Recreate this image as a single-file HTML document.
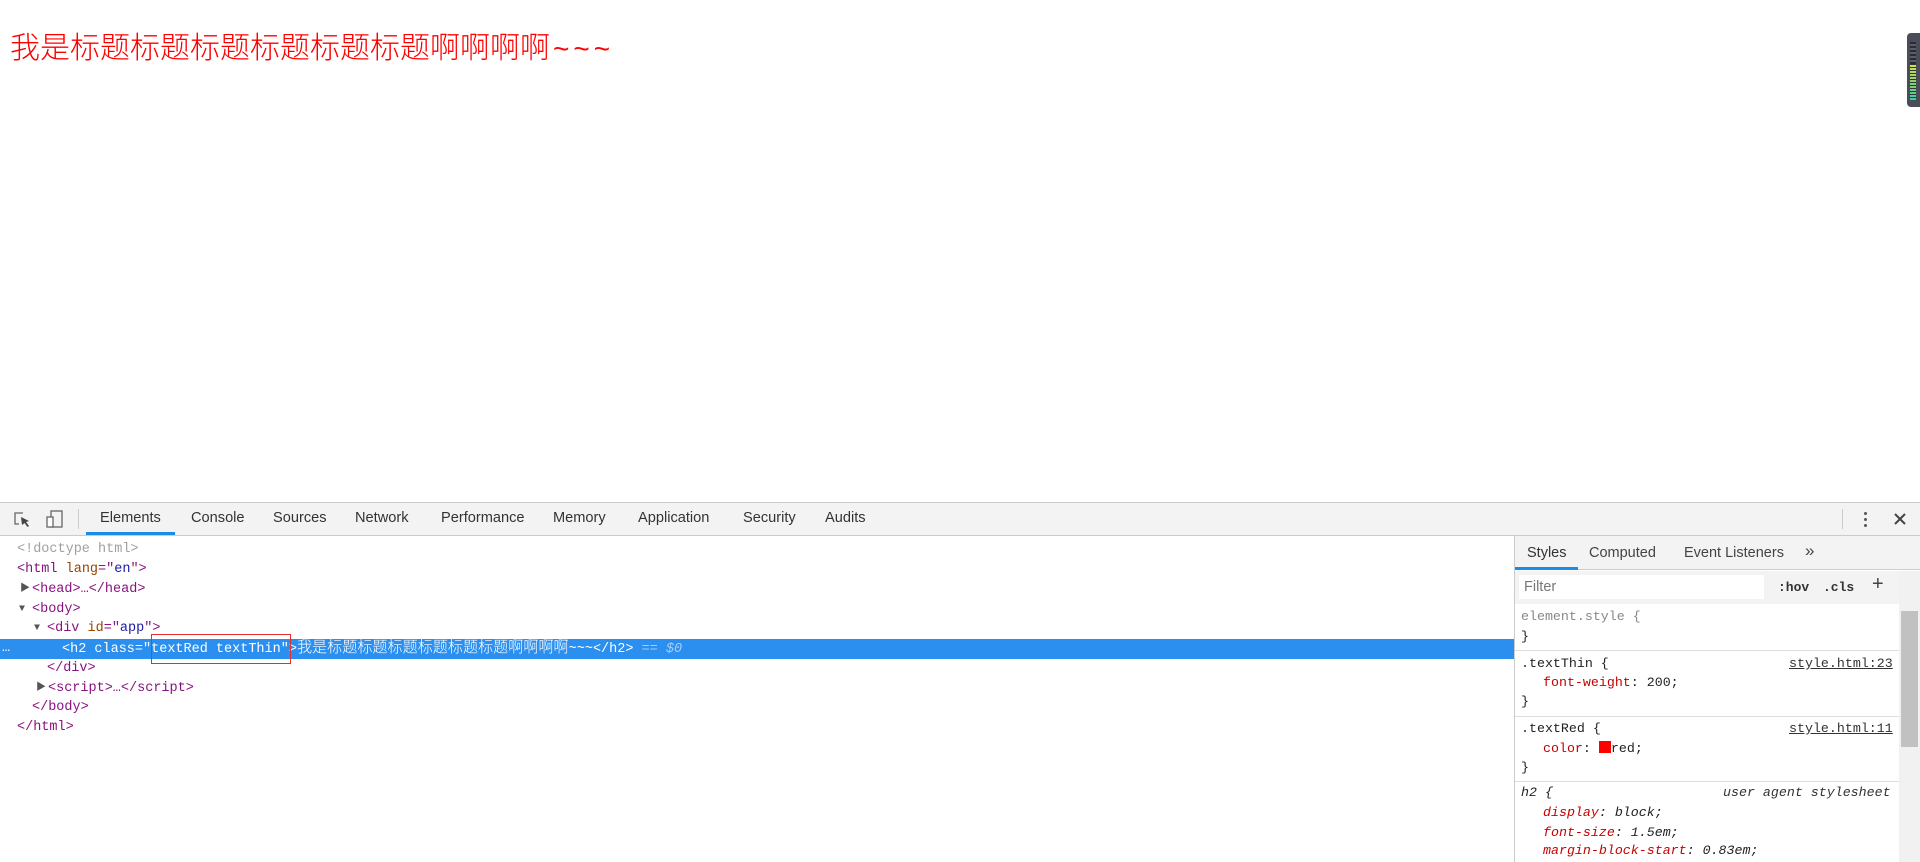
<!DOCTYPE html>
<html><head><meta charset="utf-8">
<style>
*{margin:0;padding:0;box-sizing:border-box}
body{width:1920px;height:862px;position:relative;overflow:hidden;background:#fff;font-family:"Liberation Sans","Noto Sans CJK SC",sans-serif}
.a{position:absolute;white-space:nowrap}
.m{font-family:"Liberation Mono","Noto Sans CJK SC",monospace;font-size:13.5px;line-height:20px;height:20px}
.cj{font-size:15.1px;line-height:14px;font-family:"Noto Sans CJK SC",sans-serif;font-weight:300}
.tag{color:#881280}.an{color:#994500}.av{color:#1a1aa6}.gr{color:#a0a0a0}
.tab{position:absolute;top:510px;font-size:14.6px;color:#333}
.st{font-family:"Liberation Mono",monospace;font-size:13.3px;line-height:20px;color:#222}
.pn{color:#c80000}
</style></head><body>
<div class="a" style="left:10px;top:27px;font-size:30px;line-height:36px;color:#f00;font-family:'Noto Sans CJK SC',sans-serif;font-weight:300">我是标题标题标题标题标题标题啊啊啊啊<span style="font-family:'Liberation Sans';font-size:28px;letter-spacing:4px;margin-left:3px">~~~</span></div>
<!-- widget -->
<div class="a" style="left:1907px;top:33px;width:16px;height:74px;background:#4a4d57;border-radius:4px 0 0 4px"></div>
<div class="a" style="left:1910px;top:42px;width:6px;height:22px;background:repeating-linear-gradient(#2a2c33 0 2px,#5a5d68 2px 4px)"></div>
<div class="a" style="left:1910px;top:64px;width:6px;height:36px;background:repeating-linear-gradient(#2e3a30 0 1px,transparent 1px 3px),linear-gradient(#d6e04a,#8ed070,#3ec7b0)"></div>

<!-- toolbar -->
<div class="a" style="left:0;top:502px;width:1920px;height:34px;background:#f3f3f3;border-top:1px solid #ccc;border-bottom:1px solid #ccc"></div>
<svg class="a" style="left:13px;top:511px" width="18" height="18" viewBox="0 0 18 18"><path d="M10 2H2v11h4" fill="none" stroke="#666" stroke-width="1.3"/><path d="M8 6l8 4-3 1 3 4-1.5 1-3-4-2.5 2z" fill="#444"/></svg>
<svg class="a" style="left:45px;top:509px" width="20" height="20" viewBox="0 0 20 20"><rect x="6" y="2" width="11" height="16" fill="none" stroke="#666" stroke-width="1.3"/><rect x="2" y="8" width="6" height="10" fill="#fff" stroke="#666" stroke-width="1.3"/></svg>
<div class="a" style="left:78px;top:509px;width:1px;height:20px;background:#ccc"></div>
<div class="tab" style="left:100px;color:#333">Elements</div>
<div class="a" style="left:86px;top:532px;width:89px;height:3px;background:#1a8ce6"></div>
<div class="tab" style="left:191px">Console</div>
<div class="tab" style="left:273px">Sources</div>
<div class="tab" style="left:355px">Network</div>
<div class="tab" style="left:441px">Performance</div>
<div class="tab" style="left:553px">Memory</div>
<div class="tab" style="left:638px">Application</div>
<div class="tab" style="left:743px">Security</div>
<div class="tab" style="left:825px">Audits</div>
<div class="a" style="left:1842px;top:509px;width:1px;height:20px;background:#ccc"></div>
<div class="a" style="left:1864px;top:512px;width:3px;height:3px;background:#555;border-radius:2px;box-shadow:0 6px 0 #555,0 12px 0 #555"></div>
<svg class="a" style="left:1893px;top:512px" width="14" height="14" viewBox="0 0 14 14"><path d="M2 2l10 10M12 2L2 12" stroke="#444" stroke-width="2"/></svg>

<!-- DOM -->
<div class="a" style="left:0;top:639px;width:1515px;height:20px;background:#2b8fef"></div>
<div class="a m gr" style="left:17px;top:540px">&lt;!doctype html&gt;</div>
<div class="a m" style="left:17px;top:560px"><span class="tag">&lt;html</span> <span class="an">lang</span><span class="tag">="</span><span class="av">en</span><span class="tag">"&gt;</span></div>
<div class="a m" style="left:20px;top:580px;font-size:10px;color:#555">▶</div>
<div class="a m tag" style="left:32px;top:580px">&lt;head&gt;…&lt;/head&gt;</div>
<div class="a m" style="left:19px;top:600px;font-size:10px;color:#555">▼</div>
<div class="a m tag" style="left:32px;top:600px">&lt;body&gt;</div>
<div class="a m" style="left:34px;top:619px;font-size:10px;color:#555">▼</div>
<div class="a m" style="left:47px;top:619px"><span class="tag">&lt;div</span> <span class="an">id</span><span class="tag">="</span><span class="av">app</span><span class="tag">"&gt;</span></div>
<div class="a m" style="left:2px;top:639px;color:#fff">…</div>
<div class="a m" style="left:62px;top:639px;color:#fff">&lt;h2 class="textRed textThin"&gt;<span class="cj">我是标题标题标题标题标题标题啊啊啊啊</span>~~~&lt;/h2&gt; <span style="color:#a9cdf5">== <i>$0</i></span></div>
<div class="a" style="left:151px;top:634px;width:140px;height:30px;border:1px solid #e03030"></div>
<div class="a m tag" style="left:47px;top:659px">&lt;/div&gt;</div>
<div class="a m" style="left:36px;top:679px;font-size:10px;color:#555">▶</div>
<div class="a m tag" style="left:48px;top:679px">&lt;script&gt;…&lt;/script&gt;</div>
<div class="a m tag" style="left:32px;top:698px">&lt;/body&gt;</div>
<div class="a m tag" style="left:17px;top:718px">&lt;/html&gt;</div>

<!-- styles pane -->
<div class="a" style="left:1514px;top:536px;width:1px;height:326px;background:#ccc"></div>
<div class="a" style="left:1515px;top:536px;width:405px;height:34px;background:#f3f3f3;border-bottom:1px solid #ccc"></div>
<div class="a" style="left:1527px;top:545px;font-size:14.5px;color:#333">Styles</div>
<div class="a" style="left:1589px;top:545px;font-size:14.5px;color:#444">Computed</div>
<div class="a" style="left:1684px;top:545px;font-size:14.5px;color:#444">Event Listeners</div>
<div class="a" style="left:1805px;top:541px;font-size:17px;color:#444">»</div>
<div class="a" style="left:1515px;top:567px;width:63px;height:3px;background:#1a8ce6"></div>
<div class="a" style="left:1515px;top:571px;width:385px;height:33px;background:#f3f3f3"></div>
<div class="a" style="left:1519px;top:575px;width:245px;height:24px;background:#fff"></div>
<div class="a" style="left:1524px;top:579px;font-size:14.5px;color:#777">Filter</div>
<div class="a" style="left:1778px;top:580px;font-family:'Liberation Mono',monospace;font-weight:bold;font-size:13px;color:#333">:hov</div>
<div class="a" style="left:1823px;top:580px;font-family:'Liberation Mono',monospace;font-weight:bold;font-size:13px;color:#333">.cls</div>
<div class="a" style="left:1872px;top:573px;font-size:20px;color:#444">+</div>
<div class="a" style="left:1899px;top:571px;width:21px;height:291px;background:#f1f1f1"></div>
<div class="a" style="left:1901px;top:611px;width:17px;height:136px;background:#c1c1c1"></div>
<div class="a st" style="left:1521px;top:607px;color:#888">element.style {</div>
<div class="a st" style="left:1521px;top:627px">}</div>
<div class="a" style="left:1515px;top:650px;width:384px;height:1px;background:#ddd"></div>
<div class="a st" style="left:1521px;top:654px">.textThin {</div>
<div class="a st" style="left:1789px;top:654px;text-decoration:underline;color:#333">style.html:23</div>
<div class="a st" style="left:1543px;top:673px"><span class="pn">font-weight</span>: 200;</div>
<div class="a st" style="left:1521px;top:692px">}</div>
<div class="a" style="left:1515px;top:716px;width:384px;height:1px;background:#ddd"></div>
<div class="a st" style="left:1521px;top:719px">.textRed {</div>
<div class="a st" style="left:1789px;top:719px;text-decoration:underline;color:#333">style.html:11</div>
<div class="a st" style="left:1543px;top:739px"><span class="pn">color</span>: <span style="display:inline-block;width:12px;height:12px;background:#f00;vertical-align:-1px"></span>red;</div>
<div class="a st" style="left:1521px;top:758px">}</div>
<div class="a" style="left:1515px;top:781px;width:384px;height:1px;background:#ddd"></div>
<div class="a st" style="left:1521px;top:783px;font-style:italic">h2 {</div>
<div class="a st" style="left:1723px;top:783px;font-style:italic;color:#333">user agent stylesheet</div>
<div class="a st" style="left:1543px;top:803px;font-style:italic"><span class="pn">display</span>: block;</div>
<div class="a st" style="left:1543px;top:823px;font-style:italic"><span class="pn">font-size</span>: 1.5em;</div>
<div class="a st" style="left:1543px;top:841px;font-style:italic"><span class="pn">margin-block-start</span>: 0.83em;</div>
</body></html>
